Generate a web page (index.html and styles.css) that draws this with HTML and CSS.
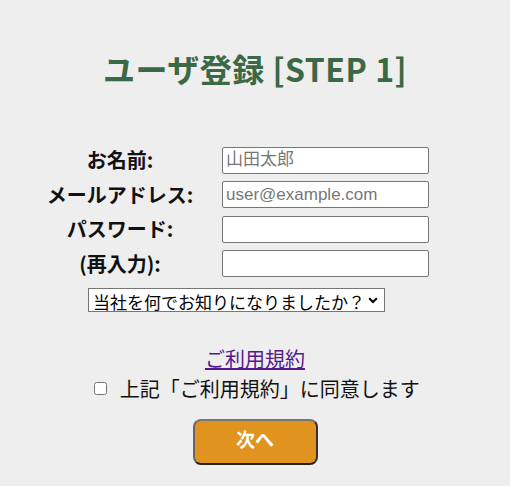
FILE: index.html
```html
<!DOCTYPE html>
<html lang="ja">
<head>
<meta charset="utf-8">
<link rel="stylesheet" href="styles.css">
</head>
<body>
<div class="page">
  <h1 class="title">ユーザ登録 [STEP 1]</h1>
  <form class="form">
    <table class="fields">
      <tr><th>お名前:</th><td><input class="field" type="text" placeholder="山田太郎"></td></tr>
      <tr><th>メールアドレス:</th><td><input class="field" type="text" placeholder="user@example.com"></td></tr>
      <tr><th>パスワード:</th><td><input class="field" type="password"></td></tr>
      <tr><th>(再入力):</th><td><input class="field" type="password"></td></tr>
      <tr><td colspan="2" class="sel-cell"><span class="sel-wrap"><select class="source"><option>当社を何でお知りになりましたか？</option></select><svg class="chev" width="10" height="7" viewBox="0 0 10 7"><path d="M1.2 1.2 L5 5 L8.8 1.2" fill="none" stroke="#000" stroke-width="2"/></svg></span></td></tr>
    </table>
    <div class="terms"><a href="#" class="terms-link">ご利用規約</a></div>
    <label class="agree"><input type="checkbox" class="check"> 上記「ご利用規約」に同意します</label>
    <div class="actions"><button type="button" class="next">次へ</button></div>
  </form>
</div>
</body>
</html>
```
FILE: styles.css
```css
html, body {
  margin: 0;
  background: #eeeeee;
}
body {
  font-family: "Noto Sans CJK JP", "Noto Sans", sans-serif;
  color: #111;
}
.page {
  width: 510px;
  padding-top: 48px;
}
.title {
  margin: 0;
  text-align: center;
  font-size: 32px;
  letter-spacing: 0.5px;
  line-height: 40px;
  font-weight: bold;
  color: #3b6845;
}
.form {
  margin-top: 55px;
}
.fields {
  border-collapse: separate;
  border-spacing: 0;
  margin-left: 38px;
}
.fields th {
  width: 164px;
  padding: 0 20px 0 0;
  text-align: center;
  font-size: 20px;
  font-weight: bold;
  height: 34.5px;
  line-height: 24px;
}
.fields td {
  padding: 0;
  height: 34.5px;
}
.field {
  box-sizing: border-box;
  width: 207px;
  height: 27px;
  border: 1px solid #767676;
  border-radius: 2px;
  background: #fff;
  font-family: "Liberation Sans", "Noto Sans CJK JP", sans-serif;
  font-size: 17px;
  padding: 1px 3px;
  margin: 0;
  display: block;
}
.field::placeholder {
  color: #777;
}
.sel-cell {
  text-align: center;
  padding-top: 2px !important;
}
.sel-wrap {
  position: relative;
  display: inline-block;
  margin-left: 6px;
  vertical-align: top;
}
.source {
  -webkit-appearance: none;
  appearance: none;
  box-sizing: border-box;
  display: block;
  font-family: "Noto Sans CJK JP", sans-serif;
  font-size: 17px;
  height: 24px;
  width: 297px;
  border: 1px solid #767676;
  border-radius: 0;
  background: #fff;
  color: #000;
  padding: 0 20px 0 4px;
  margin: 0;
}
.chev {
  position: absolute;
  right: 7px;
  top: 9px;
  pointer-events: none;
}
.terms {
  text-align: center;
  margin-top: 27px;
  font-size: 20px;
  line-height: 28px;
}
.terms-link {
  color: #551a8b;
}
.agree {
  display: block;
  text-align: center;
  font-size: 20px;
  line-height: 32px;
  margin-left: 4px;
}
.check {
  width: 13px;
  height: 13px;
  margin: 0 8px 0 0;
  vertical-align: 2px;
}
.actions {
  text-align: center;
  margin-top: 14px;
}
.next {
  width: 125px;
  height: 46px;
  background: #e0931f;
  border: 2px solid;
  border-color: #777 #333 #222 #666;
  border-radius: 8px;
  color: #fff;
  font-family: "Noto Sans CJK JP", sans-serif;
  font-size: 19px;
  font-weight: bold;
  padding: 0 0 6px 0;
}
```
